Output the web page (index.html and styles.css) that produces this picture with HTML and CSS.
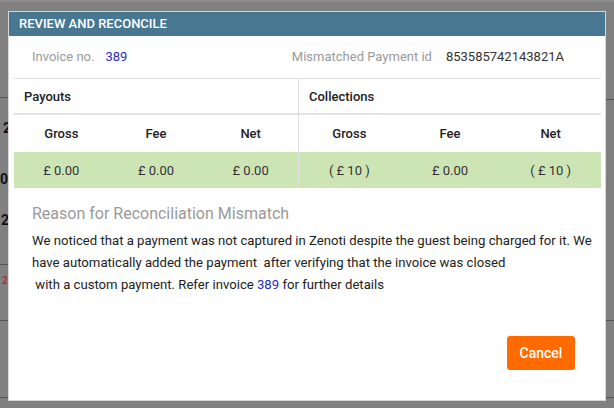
FILE: index.html
```html
<!DOCTYPE html>
<html>
<head>
<meta charset="utf-8">
<link rel="stylesheet" href="styles.css">
</head>
<body>
<div class="backdrop">
  <div class="bg-line l1"></div>
  <div class="bg-line l2"></div>
  <div class="bg-line l3"></div>
  <div class="bg-line l4"></div>
  <div class="bg-line r1"></div>
  <div class="bg-line r2"></div>
  <div class="bg-line r3"></div>
  <span class="bg-digit d1">2</span>
  <span class="bg-digit d2">0</span>
  <span class="bg-digit d3">2</span>
  <span class="bg-digit d4">2</span>
</div>
<div class="modal">
  <div class="modal-header">REVIEW AND RECONCILE</div>
  <div class="meta">
    <div class="meta-item"><span class="label">Invoice no.</span><span class="link">389</span></div>
    <div class="meta-item right"><span class="label">Mismatched Payment id</span><span class="value">853585742143821A</span></div>
  </div>
  <div class="table">
    <div class="group">
      <div class="group-title">Payouts</div>
      <div class="cols heads"><span>Gross</span><span>Fee</span><span>Net</span></div>
      <div class="cols vals"><span>£ 0.00</span><span>£ 0.00</span><span>£ 0.00</span></div>
    </div>
    <div class="group second">
      <div class="group-title">Collections</div>
      <div class="cols heads"><span>Gross</span><span>Fee</span><span>Net</span></div>
      <div class="cols vals"><span>( £ 10 )</span><span>£ 0.00</span><span>( £ 10 )</span></div>
    </div>
  </div>
  <div class="reason">
    <div class="reason-title">Reason for Reconciliation Mismatch</div>
    <p class="reason-text">We noticed that a payment was not captured in Zenoti despite the guest being charged for it. We<br>have automatically added the payment&nbsp; after verifying that the invoice was closed<br>&nbsp;with a custom payment. Refer invoice <span class="link">389</span> for further details</p>
  </div>
  <div class="actions"><button class="btn-cancel">Cancel</button></div>
</div>
</body>
</html>
```
FILE: styles.css
```css
* { box-sizing: border-box; }
html, body { margin: 0; height: 100%; }
body {
  background: #808080;
  font-family: Roboto, "Noto Sans", Arial, sans-serif;
  padding: 9px 8px 0 8px;
  position: relative;
  overflow: hidden;
  border-top: 2px solid #8c8c8c;
}
.backdrop { position: absolute; inset: 0; }
.bg-line { position: absolute; height: 1px; background: #555; width: 8px; }
.l1 { left: 0; top: 95px; }
.l2 { left: 0; top: 262px; }
.l3 { left: 0; top: 318px; }
.l4 { left: 0; top: 395px; }
.r1 { right: 0; top: 97px; }
.r2 { right: 0; top: 318px; }
.r3 { right: 0; top: 395px; }
.bg-digit { position: absolute; left: 0; font-size: 14px; font-weight: bold; color: #111; line-height: 1; }
.d1 { top: 119px; left: 3px; }
.d2 { top: 170px; left: 0; }
.d3 { top: 211px; left: 1px; }
.d4 { top: 274px; left: 2px; color: #a33; font-size: 10px; }

.modal {
  position: relative;
  width: 598px;
  height: 390px;
  background: #fff;
  border: 1px solid #d6d6d6;
  display: flex;
  flex-direction: column;
}
.modal-header {
  background: #487791;
  color: #fff;
  height: 24px;
  line-height: 24px;
  padding-left: 10px;
  font-size: 13px;
  font-weight: 500;
}
.meta {
  display: flex;
  justify-content: space-between;
  height: 43px;
  align-items: center;
  font-size: 13px;
  border-bottom: 1px solid #e0e0e0;
  margin: 0 4px 0 5px;
  padding: 0 37px 1px 18px;
}
.meta-item { display: flex; gap: 11px; }
.meta-item.right { gap: 14px; }
.label { color: #9a9a9a; }
.link { color: #2b2bc4; }
.value { color: #333; }

.table {
  display: flex;
  margin: 0 4px 0 5px;
}
.group { width: 284px; }
.group.second { flex: 1; border-left: 1px solid #e0e0e0; }
.group-title {
  height: 36px;
  line-height: 36px;
  font-size: 13px;
  font-weight: 500;
  color: #222;
  padding-left: 10px;
  border-bottom: 2px solid #e3e3e3;
}
.cols {
  display: grid;
  grid-template-columns: 1fr 1fr 1fr;
  text-align: center;
  font-size: 13px;
}
.heads { height: 37px; line-height: 38px; font-weight: 500; color: #222; }
.vals { height: 36px; line-height: 37px; background: #cde5b5; color: #333; }

.reason { padding: 16px 0 0 23px; }
.reason-title { font-size: 16px; color: #9a9a9a; line-height: 20px; }
.reason-text { margin: 6px 0 0 0; font-size: 13.15px; line-height: 22px; color: #222; }

.actions { display: flex; justify-content: flex-end; padding: 40px 30px 0 0; }
.btn-cancel {
  background: #ff6b00;
  color: #fff;
  border: none;
  border-radius: 3px;
  width: 68px;
  height: 34px;
  font-family: Roboto, "Noto Sans", Arial, sans-serif;
  font-size: 14px;
  font-weight: 500;
}
```
